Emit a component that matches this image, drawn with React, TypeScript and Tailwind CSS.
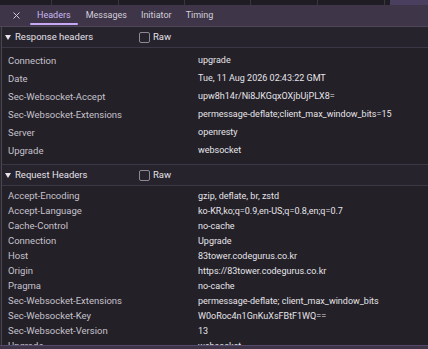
const responseHeaders: [string, string][] = [
  ['Connection', 'upgrade'],
  ['Date', 'Tue, 11 Aug 2026 02:43:22 GMT'],
  ['Sec-Websocket-Accept', 'upw8h14r/Ni8JKGqxOXjbUjPLX8='],
  ['Sec-Websocket-Extensions', 'permessage-deflate;client_max_window_bits=15'],
  ['Server', 'openresty'],
  ['Upgrade', 'websocket'],
];

const requestHeaders: [string, string][] = [
  ['Accept-Encoding', 'gzip, deflate, br, zstd'],
  ['Accept-Language', 'ko-KR,ko;q=0.9,en-US;q=0.8,en;q=0.7'],
  ['Cache-Control', 'no-cache'],
  ['Connection', 'Upgrade'],
  ['Host', '83tower.codegurus.co.kr'],
  ['Origin', 'https://83tower.codegurus.co.kr'],
  ['Pragma', 'no-cache'],
  ['Sec-Websocket-Extensions', 'permessage-deflate; client_max_window_bits'],
  ['Sec-Websocket-Key', 'W0oRoc4n1GnKuXsFBtF1WQ=='],
  ['Sec-Websocket-Version', '13'],
  ['Upgrade', 'websocket'],
];

function SectionHeader({ title }: { title: string }) {
  return (
    <div className="flex items-center h-[21px] shrink-0 bg-[#27232d] border-b border-[#3c3745]">
      <svg className="ml-[3px] w-[6px] h-[5px]" viewBox="0 0 6 5">
        <path d="M0 0h6L3 5z" fill="#e6e3ea" />
      </svg>
      <span className="ml-[4px] w-[124px] text-[#e4e1e8]">{title}</span>
      <span className="w-[11px] h-[11px] rounded-[2px] border border-[#8d8894]" />
      <span className="ml-[3px] text-[#e4e1e8]">Raw</span>
    </div>
  );
}

function Rows({ rows, h }: { rows: [string, string][]; h: string }) {
  return (
    <div>
      {rows.map(([k, v]) => (
        <div key={k + v} className={`flex items-center ${h}`}>
          <span className="pl-[6px] w-[196px] shrink-0 text-[#c6c2cc]">{k}</span>
          <span className="text-[9px] text-[#e6e4ea] whitespace-nowrap">{v}</span>
        </div>
      ))}
    </div>
  );
}

export default function App() {
  return (
    <div
      className="w-[428px] h-[349px] overflow-hidden bg-[#232027] text-[9.5px] flex flex-col"
      style={{ fontFamily: 'Roboto, "Liberation Sans", sans-serif' }}
    >
      {/* window strip */}
      <div className="flex h-[5px] shrink-0 bg-[#1f1c23]">
        <div className="w-[52px] border-r border-[#3a3640]" />
        <div className="w-[67px] border-r border-[#3a3640]" />
        <div className="w-[66px] border-r border-[#3a3640]" />
        <div className="w-[66px] border-r border-[#3a3640]" />
        <div className="w-[67px] border-r border-[#3a3640]" />
        <div className="w-[67px] border-r border-[#3a3640]" />
        <div className="w-[5px]" />
        <div className="flex-1 bg-[#4b3f60]" />
      </div>

      {/* tab bar */}
      <div className="flex items-stretch h-[22px] shrink-0 bg-[#3e3548] border-b border-[#4e4558] text-[9px]">
        <div className="w-[30px] flex items-center justify-center">
          <svg className="w-[7px] h-[7px] ml-[2px]" viewBox="0 0 7 7">
            <path d="M0.5 0.5l6 6M6.5 0.5l-6 6" stroke="#cfcbd6" strokeWidth="1" />
          </svg>
        </div>
        <div className="relative px-[7px] flex items-center text-[#cdb8f4]">
          Headers
          <div className="absolute left-0 right-0 bottom-[1px] h-[2px] rounded-full bg-[#c6a8f5]" />
        </div>
        <div className="ml-[1px] px-[7px] flex items-center text-[#d2cfd8]">Messages</div>
        <div className="px-[7px] flex items-center text-[#d2cfd8]">Initiator</div>
        <div className="px-[7px] flex items-center text-[#d2cfd8]">Timing</div>
      </div>

      <div className="flex-1 flex min-h-0">
        <div className="w-[2px] bg-[#2b2731] border-r border-[#4a4650] shrink-0" />
        <div className="flex-1 min-h-0 flex flex-col">
          <SectionHeader title="Response headers" />
          <div className="pt-[4px] pb-[4px] border-b border-[#3c3745]">
            <Rows rows={responseHeaders} h="h-[18px]" />
          </div>
          <SectionHeader title="Request Headers" />
          <div className="pt-[3px] flex-1 min-h-0 overflow-hidden">
            <Rows rows={requestHeaders} h="h-[15px]" />
          </div>
        </div>
      </div>
      <div className="h-[4px] shrink-0 bg-[#3e3548] border-t border-[#54496a]" />
    </div>
  );
}
